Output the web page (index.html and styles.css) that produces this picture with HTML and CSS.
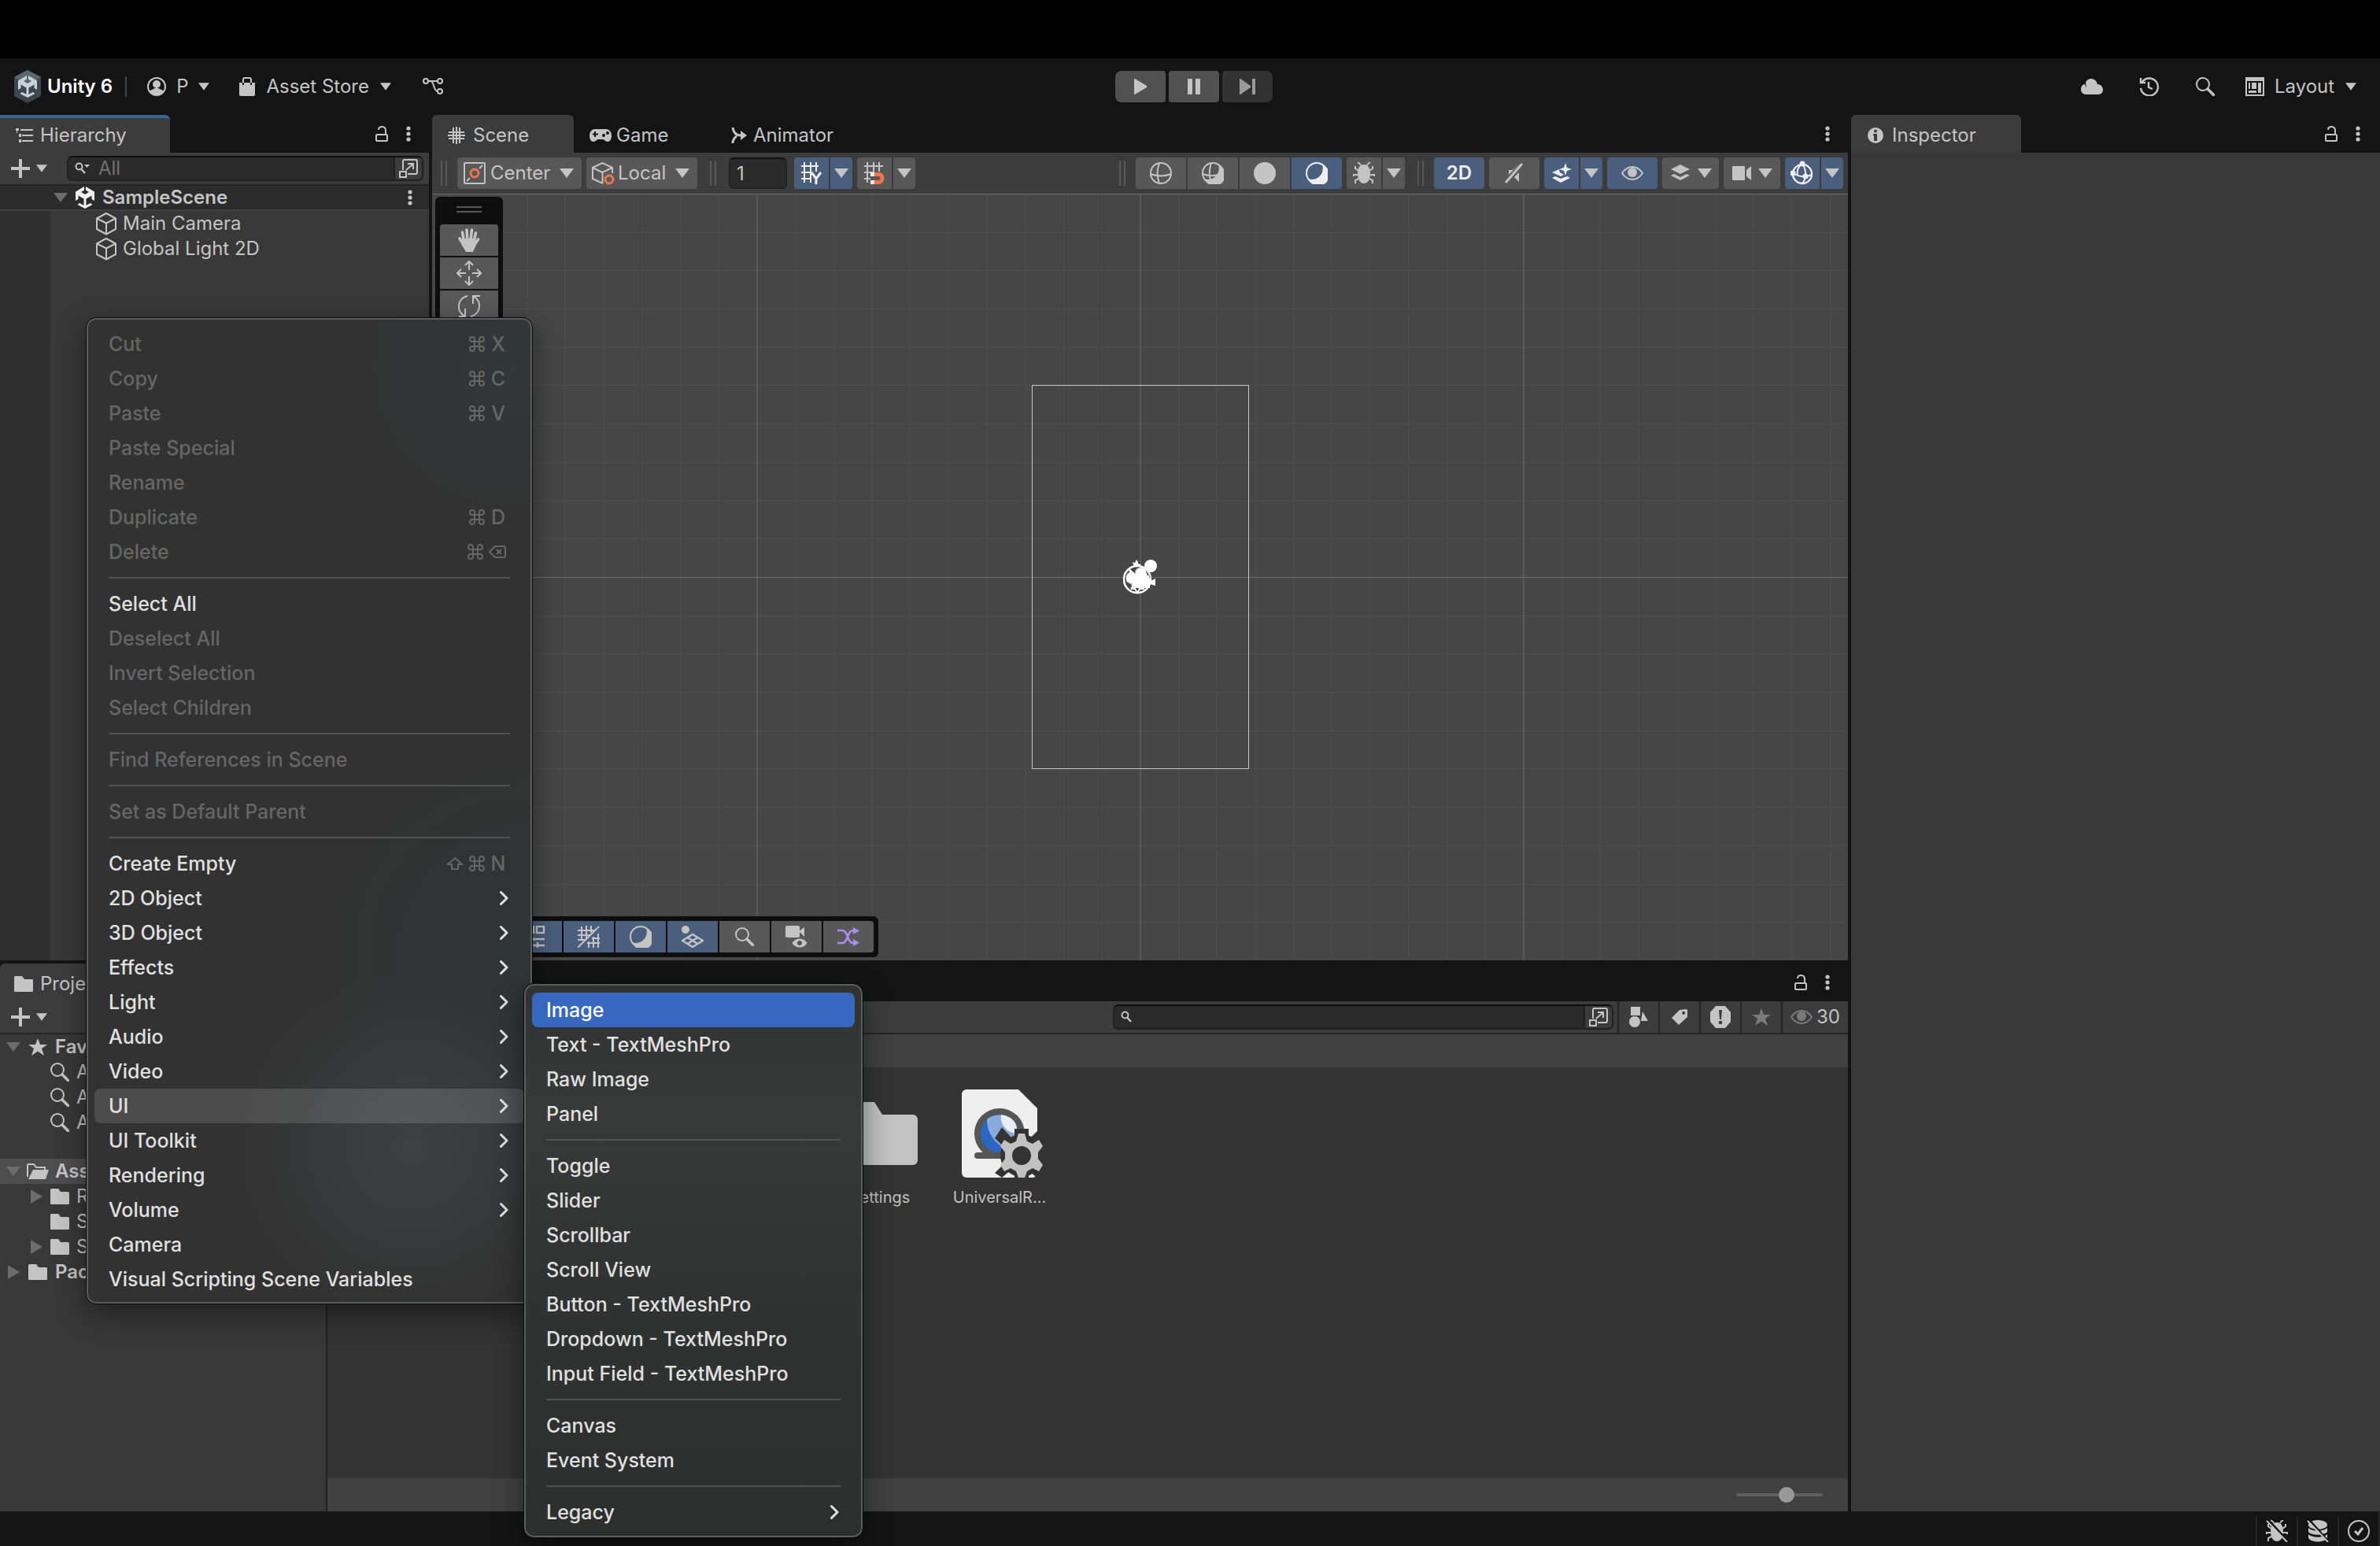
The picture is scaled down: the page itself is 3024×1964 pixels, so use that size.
FILE: index.html
```html
<!DOCTYPE html>
<html lang="en">
<head>
<meta charset="utf-8">
<title>Unity 6 - SampleScene</title>
<link rel="stylesheet" href="styles.css">
</head>
<body>
<svg class="sprite" aria-hidden="true">
  <symbol id="caret" viewBox="0 0 18 12"><path d="M0 0h18L9 12z"/></symbol>
  <symbol id="lock" viewBox="0 0 18 22"><path d="M5 6C5 3 7 2 9.500 2C13 2 14 4 14 7V12" fill="none" stroke="currentColor" stroke-width="2"/><rect x="2" y="12" width="14" height="8" rx="1" fill="none" stroke="currentColor" stroke-width="2"/></symbol>
  <symbol id="dots" viewBox="0 0 6 20"><circle cx="3" cy="3" r="2.600"/><circle cx="3" cy="10" r="2.600"/><circle cx="3" cy="17" r="2.600"/></symbol>
  <symbol id="plus" viewBox="0 0 24 24"><path d="M10 0h4v10h10v4H14v10h-4V14H0v-4h10z"/></symbol>
  <symbol id="search" viewBox="0 0 24 24"><circle cx="9" cy="9" r="8" fill="none" stroke="currentColor" stroke-width="2"/><path d="M15 15l7.500 7.500" stroke="currentColor" stroke-width="3.500" stroke-linecap="round"/></symbol>
  <symbol id="search-small" viewBox="0 0 20 16"><circle cx="5.500" cy="5.500" r="4" fill="none" stroke="currentColor" stroke-width="2"/><path d="M8.500 9l4.500 5" stroke="currentColor" stroke-width="2.400"/></symbol>
  <symbol id="popout" viewBox="0 0 24 24"><path d="M5 14V3a2 2 0 0 1 2-2h14a2 2 0 0 1 2 2v14a2 2 0 0 1-2 2H11" fill="none" stroke="currentColor" stroke-width="2"/><rect x="1" y="16" width="8" height="7" fill="none" stroke="currentColor" stroke-width="2"/><path d="M9 14l8-7M11 6h7v7" fill="none" stroke="currentColor" stroke-width="2"/></symbol>
  <symbol id="cube" viewBox="0 0 28 30"><path d="M14 2L26 8.500V22L14 28.500L2 22V8.500zM2 8.500L14 14.500L26 8.500M14 14.500V28" fill="none" stroke="currentColor" stroke-width="2" stroke-linejoin="round"/></symbol>
  <symbol id="unity" viewBox="0 0 26 28"><path d="M12 0L1 6.500v11.500l3.500-2V11.500l7 4v8.500l-2.500-1.500-3-1.500-2.500 2L13 28l9.500-5-2.500-2-3 1.500-2.500 1.500v-8.500l7-4V16l3.500 2V6.500L14 0v4.500l4 2.500-5 3-5-3 4-2.500z"/></symbol>
  <symbol id="folder" viewBox="0 0 24 20"><path d="M0 1.500A1.500 1.500 0 0 1 1.500 0H10l3 4h9.500A1.500 1.500 0 0 1 24 5.500v13a1.500 1.500 0 0 1-1.500 1.500h-21A1.500 1.500 0 0 1 0 18.500z"/></symbol>
  <symbol id="folder-open" viewBox="0 0 28 20"><path d="M1 17V2a1 1 0 0 1 1-1h7l3 4h11v3" fill="none" stroke="currentColor" stroke-width="2"/><path d="M8 8h20l-4 12H2z"/></symbol>
  <symbol id="star" viewBox="0 0 24 22"><path d="M12 0l3 8h9l-7 5 3 9-8-5.500L4 22l3-9-7-5h9z"/></symbol>
  <symbol id="hash" viewBox="0 0 22 22"><path d="M7 1v20M15 1v20M1 7h20M1 15h20M11 0v22M0 11h22" stroke="currentColor" stroke-width="2"/></symbol>
  <symbol id="chevron" viewBox="0 0 12 20"><path d="M2.500 2.500L10 10L2.500 17.500" fill="none" stroke="currentColor" stroke-width="3" stroke-linecap="round" stroke-linejoin="round"/></symbol>
  <symbol id="cmd" viewBox="0 0 20 20"><path d="M7 7V4a3 3 0 1 0-3 3h12a3 3 0 1 0-3-3v12a3 3 0 1 0 3-3H4a3 3 0 1 0 3 3z" fill="none" stroke="currentColor" stroke-width="2"/></symbol>
  <symbol id="bug" viewBox="0 0 28 28"><path d="M14 3c6 0 8 5 8 12s-3 12-8 12-8-5-8-12 2-12 8-12z"/><path d="M10 4L8 1M8 1H6M18 4l2-3M20 1h2M7 11L3 8V5M21 11l4-3V5M6 16H1v2M22 16h5v2M7 21l-4 2v4M21 21l4 2v4" fill="none" stroke="currentColor" stroke-width="2"/></symbol>
  <symbol id="eye" viewBox="0 0 28 20"><path d="M1 10C5 4 9 2 14 2s9 2 13 8c-4 6-8 8-13 8S5 16 1 10z" fill="none" stroke="currentColor" stroke-width="2"/><circle cx="14" cy="9" r="6"/></symbol>
  <symbol id="shade" viewBox="0 0 28 28"><circle cx="14" cy="14" r="13" fill="none" stroke="currentColor" stroke-width="2"/><path d="M21 3a14 14 0 1 1-18 18C13 25 25 16 21 3z"/></symbol>
</svg>

<div class="bezel"></div>

<header class="appbar">
  <div class="appbar-left">
    <svg class="logo" viewBox="0 0 34 42"><path d="M17 0L34 9v24L17 42L0 33V9z" fill="#3e464f"/><path d="M17 0L34 9L17 19L0 9z" fill="#5c6770"/><g transform="translate(4,7)" fill="#c9d1da"><path d="M12 0L1 6.500v11.500l3.500-2V11.500l7 4v8.500l-2.500-1.500-3-1.500-2.500 2L13 28l9.500-5-2.500-2-3 1.500-2.500 1.500v-8.500l7-4V16l3.500 2V6.500L14 0v4.500l4 2.500-5 3-5-3 4-2.500z"/></g></svg>
    <strong class="product">Unity 6</strong>
    <span class="rule"></span>
    <button class="bar-btn account" aria-label="Account"><svg width="24" height="24" viewBox="0 0 24 24"><circle cx="12" cy="12" r="11" fill="none" stroke="currentColor" stroke-width="2"/><circle cx="12" cy="9" r="5"/><path d="M3.500 18c2-3 5-2.500 6-4h5c1 1.500 4 1 6 4-2 3-5 5-8.500 5s-6.500-2-8.500-5z"/></svg>P<svg class="caret-s"><use href="#caret"/></svg></button>
    <button class="bar-btn store"><svg width="20" height="24" viewBox="0 0 20 24"><path d="M0 7h20v15a2 2 0 0 1-2 2H2a2 2 0 0 1-2-2z"/><path d="M5 8V3a2 2 0 0 1 2-2h6a2 2 0 0 1 2 2v5" fill="none" stroke="currentColor" stroke-width="2"/><path d="M5 7v3M15 7v3" stroke="#141414" stroke-width="2"/></svg>Asset Store<svg class="caret-s"><use href="#caret"/></svg></button>
    <button class="bar-btn" aria-label="Version control"><svg width="26" height="24" viewBox="0 0 26 24" fill="none" stroke="currentColor" stroke-width="2"><circle cx="4" cy="5" r="3"/><circle cx="22" cy="5" r="3"/><circle cx="22" cy="18" r="3"/><path d="M7 5h12M10 5c5 0 3 12 9 13"/></svg></button>
  </div>
  <div class="playback">
    <button aria-label="Play"><svg width="16" height="20" viewBox="0 0 16 20"><path d="M0 0h1l15 9v2L1 20H0z"/></svg></button>
    <button aria-label="Pause"><svg width="16" height="20" viewBox="0 0 16 20"><rect width="6" height="20" rx="1"/><rect x="10" width="6" height="20" rx="1"/></svg></button>
    <button aria-label="Step" class="off"><svg width="20" height="20" viewBox="0 0 20 20"><path d="M0 0h1l13 9v2L1 20H0z"/><rect x="16" width="4" height="20"/></svg></button>
  </div>
  <div class="appbar-right">
    <button class="bar-btn" aria-label="Cloud"><svg width="28" height="20" viewBox="0 0 28 20"><path d="M6 20a6 6 0 0 1-6-6c0-4 2-7 5-7l2 5-1-7c2-7 13-7 15 2 4 0 7 3 7 7 0 3-2 6-6 6z"/></svg></button>
    <button class="bar-btn" aria-label="History"><svg width="26" height="24" viewBox="0 0 26 24" fill="none" stroke="currentColor" stroke-width="2.400"><path d="M4 6A11 11 0 1 1 2 14M2 1v6h6M12 6v7l5 2"/></svg></button>
    <button class="bar-btn" aria-label="Search"><svg width="24" height="24"><use href="#search"/></svg></button>
    <label class="bar-select"><svg width="24" height="24" viewBox="0 0 24 24"><path d="M1 1h22v22H1z" fill="none" stroke="currentColor" stroke-width="2"/><path d="M1 1h22v4H1zM4 7h2v8H4zM8 7h6v8H8zM16 7h4v13h-4zM4 17h10v3H4z"/></svg><select aria-label="Layout"><option>Layout</option></select><svg class="caret-s"><use href="#caret"/></svg></label>
  </div>
</header>

<main class="workspace">
  <div class="work-left">
    <div class="work-top">
      <section class="panel hierarchy">
        <div class="tabs">
          <button class="tab active focus"><svg width="22" height="20" viewBox="0 0 22 20"><path d="M6 3h16M8 10h14M8 17h14" stroke="currentColor" stroke-width="2"/><path d="M0 1h4v3H0zM4 8h3v4H4zM4 15h3v4H4zM1 4h1v3H1z"/></svg>Hierarchy</button>
          <span class="tab-tools"><svg width="18" height="22"><use href="#lock"/></svg><svg width="6" height="20"><use href="#dots"/></svg></span>
        </div>
        <div class="toolbar hier-bar">
          <button class="add" aria-label="Add"><svg width="24" height="24"><use href="#plus"/></svg><svg class="caret-s"><use href="#caret"/></svg></button>
          <label class="search"><svg width="22" height="16" viewBox="0 0 22 16"><use href="#search-small" width="20" height="16"/><path d="M12 3h7l-3.500 4z"/></svg><input type="text" placeholder="All" aria-label="Search hierarchy"><span class="search-end"><svg width="24" height="24"><use href="#popout"/></svg></span></label>
        </div>
        <div class="hier-body">
          <div class="hrow scene-row"><svg class="fold" width="18" height="14"><use href="#caret" width="18" height="14"/></svg><svg class="white" width="26" height="28"><use href="#unity"/></svg><b>SampleScene</b><svg class="end" width="6" height="20"><use href="#dots"/></svg></div>
          <div class="hrows">
            <div class="hrow child"><svg width="28" height="30"><use href="#cube"/></svg>Main Camera</div>
            <div class="hrow child"><svg width="28" height="30"><use href="#cube"/></svg>Global Light 2D</div>
          </div>
        </div>
      </section>

      <section class="panel scene">
        <div class="tabs">
          <button class="tab active t-scene"><svg width="22" height="22"><use href="#hash"/></svg>Scene</button>
          <button class="tab t-game"><svg width="28" height="18" viewBox="0 0 28 18"><path d="M7 1h14a7 8 0 0 1 7 8c0 5-2 8-5 8s-4-3-6-3h-6c-2 0-3 3-6 3s-5-3-5-8a7 8 0 0 1 7-8z"/><path d="M7 4v7M4 7.500h7" stroke="#141414" stroke-width="2"/><circle cx="18" cy="9" r="2" fill="#141414"/><circle cx="23" cy="6" r="2" fill="#141414"/></svg>Game</button>
          <button class="tab t-anim"><svg width="20" height="22" viewBox="0 0 20 22"><path d="M2 1c1 7 4 10 10 10M2 21c0-4 2-7 5-9" fill="none" stroke="currentColor" stroke-width="3"/><path d="M12 5l8 6-8 6z"/></svg>Animator</button>
          <span class="tab-tools"><svg width="6" height="20"><use href="#dots"/></svg></span>
        </div>
        <div class="scene-bar">
          <span class="grip"></span>
          <label class="drop w-center"><svg width="28" height="28" viewBox="0 0 28 28" fill="none" stroke-width="2"><rect x="1" y="1" width="26" height="26" rx="1" stroke="currentColor"/><path d="M4 24l4-4M20 8l4-4" stroke="currentColor"/><circle cx="14" cy="14" r="5" stroke="#f0764a" stroke-width="3"/></svg><select aria-label="Handle position"><option>Center</option></select><svg class="caret"><use href="#caret"/></svg></label>
          <label class="drop w-local"><svg width="30" height="30" viewBox="0 0 30 30" fill="none" stroke-width="2"><path d="M15 28L2 22V8L14.500 2L27 8v7M2 8l12.500 6L27 8M14.500 14v14" stroke="currentColor"/><circle cx="23" cy="23" r="5" stroke="#f0764a" stroke-width="3"/></svg><select aria-label="Handle rotation"><option>Local</option></select><svg class="caret"><use href="#caret"/></svg></label>
          <span class="grip g2"></span>
          <input class="snap" type="text" value="1" aria-label="Grid size">
          <span class="split"><button class="on w44" aria-label="Grid axis"><svg width="28" height="28" viewBox="0 0 28 28"><path d="M5 0v26M13 0v26M20 0v12M1 5h22M1 13h13M1 21h13" stroke="currentColor" stroke-width="2"/><path d="M14 13l6 8 6-8M20 20v8" fill="none" stroke="currentColor" stroke-width="3"/></svg></button><button class="on w28" aria-label="Grid options"><svg class="caret"><use href="#caret"/></svg></button></span>
          <span class="split"><button class="w44" aria-label="Snapping"><svg width="28" height="28" viewBox="0 0 28 28"><path d="M5 0v26M13 0v14M20 0v12M1 5h24M1 13h13M1 21h8" stroke="currentColor" stroke-width="2"/><path d="M14 15.500h6a4 5 0 0 1 0 10h-6" fill="none" stroke="#f0764a" stroke-width="5"/><path d="M9 13h5v5H9zM9 23h5v5H9z" fill="#eee"/></svg></button><button class="w28" aria-label="Snap options"><svg class="caret"><use href="#caret"/></svg></button></span>
          <span class="spacer"></span>
          <span class="grip"></span>
          <span class="split modes">
            <button aria-label="Wireframe"><svg width="28" height="28" viewBox="0 0 28 28" fill="none" stroke="currentColor" stroke-width="2"><circle cx="14" cy="14" r="13"/><path d="M12 1c-3 8-3 18 0 26M1 15c8 3 18 3 26 0"/></svg></button>
            <button aria-label="Shaded wireframe"><svg width="28" height="28"><use href="#shade"/><path d="M12 1c-3 8-3 18 0 24M1 15c8 3 13 3 20 1" fill="none" stroke="currentColor" stroke-width="2"/></svg></button>
            <button aria-label="Unlit"><svg width="28" height="28"><circle cx="14" cy="14" r="14"/></svg></button>
            <button class="on" aria-label="Shaded"><svg width="28" height="28"><use href="#shade"/></svg></button>
          </span>
          <span class="split"><button class="w44" aria-label="Debug draw"><svg width="28" height="28"><use href="#bug"/></svg></button><button class="w28" aria-label="Debug options"><svg class="caret"><use href="#caret"/></svg></button></span>
          <span class="grip g3"></span>
          <button class="tool on w64"><b>2D</b></button>
          <button class="tool w64" aria-label="Audio"><svg width="28" height="28" viewBox="0 0 28 28"><path d="M7 10h5l8-7v22l-6-6H7z"/><path d="M0 28L26 2" stroke="#585858" stroke-width="7"/><path d="M3 26L24 2" stroke="currentColor" stroke-width="3"/></svg></button>
          <span class="split"><button class="on w44" aria-label="Effects"><svg width="28" height="28" viewBox="0 0 28 28"><path d="M19 1l2 6 6 2-6 2-2 6-2-6-6-2 6-2z"/><path d="M2 13l9-4 1 4 5 3-4 2zM2 20l4-2 7 3 8-3 4 2-12 6z"/></svg></button><button class="on w28" aria-label="Effects options"><svg class="caret"><use href="#caret"/></svg></button></span>
          <button class="tool on dim w64" aria-label="Scene visibility"><svg width="28" height="20"><use href="#eye"/></svg></button>
          <button class="tool w72" aria-label="Layers"><svg width="26" height="22" viewBox="0 0 26 22"><path d="M1 6l12-6 12 6-12 6zM1 14l4-2 8 4 8-4 4 2-12 6z"/></svg><svg class="caret"><use href="#caret"/></svg></button>
          <button class="tool w72" aria-label="Camera"><svg width="24" height="20" viewBox="0 0 24 20"><rect y="1" width="16" height="18" rx="1"/><path d="M18 6l6-5v18l-6-5z"/></svg><svg class="caret"><use href="#caret"/></svg></button>
          <span class="split"><button class="on w44" aria-label="Gizmos"><svg width="30" height="32" viewBox="0 0 30 32"><circle cx="15" cy="17" r="12" fill="none" stroke="currentColor" stroke-width="2.400"/><path d="M15 4c5 7 6 18 0 25M3 16c8 5 17 5 24 2M14 4c-5 6-6 8-5 15" fill="none" stroke="currentColor" stroke-width="2"/><circle cx="15" cy="4" r="3.500"/><circle cx="3" cy="16" r="3.500"/><circle cx="19" cy="20" r="3.500"/></svg></button><button class="on w28" aria-label="Gizmo options"><svg class="caret"><use href="#caret"/></svg></button></span>
        </div>
        <div class="canvas">
          <svg class="grid" aria-hidden="true">
            <defs><pattern id="cells" width="487" height="487" patternUnits="userSpaceOnUse">
              <path d="M49.500 0v487M97.500 0v487M146.500 0v487M195.500 0v487M243.500 0v487M292.500 0v487M341.500 0v487M390.500 0v487M438.500 0v487M0 49.500h487M0 97.500h487M0 146.500h487M0 195.500h487M0 243.500h487M0 292.500h487M0 341.500h487M0 390.500h487M0 438.500h487" stroke="#4f4f4f"/>
              <path d="M0.500 0v487M0 0.500h487" stroke="#6c6c6c"/>
            </pattern></defs>
            <svg x="50%" y="50%" overflow="visible"><rect x="-2922" y="-2922" width="5844" height="5844" fill="url(#cells)"/></svg>
          </svg>
          <div class="camera-frame">
            <svg width="44" height="46" viewBox="0 0 44 46"><circle cx="18" cy="26" r="17" fill="none" stroke="#fff" stroke-width="2.500"/><path d="M8 14l5 5M28 14l-5 5M10 38l4-3M26 38l-4-3" stroke="#fff" stroke-width="3"/><path d="M4 22a7 7 0 0 1 11-4c1-9 14-9 15 1l5 4v5l6-3v9l-7-2v5H12l-2-5c-5-1-7-4-6-10z" fill="#fff"/><path d="M10 38h5l3 5 3-5h6" fill="none" stroke="#fff" stroke-width="2"/><path d="M6 29c2 3 4 3 6 3M15 19c0-5 2-7 5-8M30 20l4 1v4" fill="none" stroke="#777" stroke-width="1"/><circle cx="35" cy="9" r="8" fill="#fff"/><path d="M12 4l3 1 2-4 2 3v2l4 1-5 3h-4z" fill="#fff"/></svg>
          </div>
          <div class="tool-stack">
            <span class="handle"></span>
            <button aria-label="Hand"><svg width="28" height="32" viewBox="0 0 28 32"><path d="M7.500 18L5.500 6M11.800 16L11 3M16 16l1.500-13M20 18L22.500 7M7 22L2 14M21 22l4.500-7" stroke="currentColor" stroke-width="3.600" stroke-linecap="round"/><path d="M5 14l17 0 1 8-4 9H10L4 21z"/></svg></button>
            <button aria-label="Move"><svg width="32" height="32" viewBox="0 0 32 32" fill="none" stroke="currentColor" stroke-width="2"><path d="M16 12V1M11 6l5-5 5 5M16 20v11M11 26l5 5 5-5M12 16H1M6 11l-5 5 5 5M20 16h11M26 11l5 5-5 5"/></svg></button>
            <button aria-label="Rotate"><svg width="28" height="28" viewBox="0 0 28 28" fill="none" stroke="currentColor" stroke-width="2"><path d="M12 1C-2 4-2 22 8 26M9 17v10H1M16 27C30 24 30 6 20 2M19 11V1h9"/></svg></button>
          </div>
          <div class="view-strip">
            <button class="on" aria-label="Tool settings"><svg width="28" height="28" viewBox="0 0 28 28" fill="none" stroke="currentColor" stroke-width="2.400"><rect x="2" y="1" width="8" height="8"/><rect x="14" y="1" width="9" height="8"/><path d="M0 17h24M8 13v8M0 25h24M15 21v7"/></svg></button>
            <button class="on" aria-label="Grid and snap"><svg width="28" height="28" viewBox="0 0 28 28" stroke="currentColor" stroke-width="2"><path d="M5 1v18M11 0v16M17 0v9M0 6h22M0 12h16M0 18h10M0 28L27 1M14 20v8M20 14v14M26 10v18M12 22h16M18 16h10"/></svg></button>
            <button class="on" aria-label="Draw modes"><svg width="28" height="28"><use href="#shade"/></svg></button>
            <button class="on" aria-label="View options"><svg width="28" height="28" viewBox="0 0 28 28"><circle cx="5" cy="5" r="5"/><path d="M14 11l13 8-13 8-13-8zM7.500 15l13 8M20.500 15l-13 8" fill="none" stroke="currentColor" stroke-width="2.400"/></svg></button>
            <button aria-label="Search scene"><svg width="24" height="24"><use href="#search"/></svg></button>
            <button aria-label="Camera preview"><svg width="28" height="28" viewBox="0 0 28 28"><rect width="18" height="15" rx="2"/><path d="M17 7l7-5v12z"/><path d="M8 22c5-8 15-8 20 0-5 8-15 8-20 0z" stroke="#585858"/><circle cx="18" cy="22" r="3" fill="#585858"/></svg></button>
            <button class="violet" aria-label="Orientation"><svg width="28" height="24" viewBox="0 0 28 24"><path d="M0 4h6c8 0 6 16 14 16h3M0 20h6c8 0 6-16 14-16h3" fill="none" stroke="currentColor" stroke-width="2.500"/><path d="M20 0l8 4.500-8 4.500zM20 15l8 4.500-8 4.500z"/></svg></button>
          </div>
        </div>
      </section>
    </div>

    <section class="panel project">
      <div class="tabs">
        <button class="tab active t-project"><svg width="24" height="20"><use href="#folder"/></svg>Project</button>
        <span class="tab-tools"><svg width="18" height="22"><use href="#lock"/></svg><svg width="6" height="20"><use href="#dots"/></svg></span>
      </div>
      <div class="toolbar proj-bar">
        <button class="add" aria-label="Create"><svg width="24" height="24"><use href="#plus"/></svg><svg class="caret-s"><use href="#caret"/></svg></button>
        <label class="search"><svg width="20" height="16"><use href="#search-small"/></svg><input type="text" aria-label="Search project"><span class="search-end"><svg width="24" height="24"><use href="#popout"/></svg></span></label>
        <div class="filters">
          <button aria-label="Filter by type"><svg width="26" height="28" viewBox="0 0 26 28"><path d="M3 1h12v11H3zM18 7l7 12h-9z"/><circle cx="8" cy="20" r="7.500" stroke="#3c3c3c"/></svg></button>
          <button aria-label="Filter by label"><svg width="22" height="22" viewBox="0 0 22 22"><path d="M11 2l9-1 1 1v9L10 21 1 12zM17 4a2 2 0 1 0 1 1z"/></svg></button>
          <button aria-label="Import log"><svg width="28" height="28" viewBox="0 0 28 28"><path d="M8 0h12l7 8v12l-7 8H8l-7-8V8z"/><path d="M12 5h4l-1 12h-2z" fill="#3c3c3c"/><circle cx="14" cy="21" r="2.300" fill="#3c3c3c"/></svg></button>
          <button class="faint" aria-label="Save search"><svg width="24" height="22"><use href="#star"/></svg></button>
          <button class="count"><svg class="faint" width="28" height="20"><use href="#eye"/></svg>30</button>
        </div>
      </div>
      <div class="proj-body">
        <div class="tree">
          <div class="trow bold"><svg class="fold" width="18" height="14"><use href="#caret" width="18" height="14"/></svg><svg width="24" height="22"><use href="#star"/></svg>Favorites</div>
          <div class="trow kid"><svg width="24" height="24"><use href="#search"/></svg>All Materials</div>
          <div class="trow kid"><svg width="24" height="24"><use href="#search"/></svg>All Models</div>
          <div class="trow kid"><svg width="24" height="24"><use href="#search"/></svg>All Prefabs</div>
          <div class="tree-gap"></div>
          <div class="trow bold picked"><svg class="fold" width="18" height="14"><use href="#caret" width="18" height="14"/></svg><svg width="28" height="20"><use href="#folder-open"/></svg>Assets</div>
          <div class="trow sub"><svg class="fold" width="18" height="18" viewBox="0 0 18 18"><path d="M2 0l15 9-15 9z"/></svg><svg width="24" height="20"><use href="#folder"/></svg>Resources</div>
          <div class="trow kid"><svg width="24" height="20"><use href="#folder"/></svg>Scenes</div>
          <div class="trow sub"><svg class="fold" width="18" height="18" viewBox="0 0 18 18"><path d="M2 0l15 9-15 9z"/></svg><svg width="24" height="20"><use href="#folder"/></svg>Settings</div>
          <div class="trow bold"><svg class="fold" width="18" height="18" viewBox="0 0 18 18"><path d="M2 0l15 9-15 9z"/></svg><svg width="24" height="20"><use href="#folder"/></svg>Packages</div>
        </div>
        <div class="assets">
          <div class="crumbs"></div>
          <div class="asset-grid">
            <figure><svg width="96" height="112" viewBox="0 0 96 112"><path d="M0 22a6 6 0 0 1 6-6h35l10 16h39a6 6 0 0 1 6 6v52a6 6 0 0 1-6 6H6a6 6 0 0 1-6-6z"/></svg><figcaption>Settings</figcaption></figure>
            <figure><svg width="112" height="112" viewBox="-8 0 112 112"><path d="M0 6a6 6 0 0 1 6-6h66l24 24v82a6 6 0 0 1-6 6H6a6 6 0 0 1-6-6z" fill="#eee"/><rect x="16" y="80" width="50" height="8" rx="4" fill="#555"/><circle cx="48" cy="56" r="32" fill="#555"/><circle cx="48" cy="56" r="24" fill="#2c66c4"/><path d="M32 38c8-8 28-8 36 4 6 12 0 26-12 34-14-8-24-20-24-38z" fill="#87abdc"/><path d="M50 32c14 2 20 10 21 24-12 0-23-10-21-24z" fill="#e8eef6"/><g transform="translate(76,84)"><circle r="27" fill="#333"/><path d="M-9-34H9V28H-9zM-34-22l9-14L28 22l-9 6zM34-22l-9-14L-34 22l9 6z" fill="#333"/><path d="M-4-28H4l3 10 7 3 8-5 5 8-6 8v8l6 8-5 8-8-4-7 4-3 8h-8l-3-8-7-4-8 4-5-8 6-8v-8l-6-8 5-8 8 5 7-3z" fill="#c2c2c2"/><circle r="12" fill="#333"/></g></svg><figcaption>UniversalR...</figcaption></figure>
          </div>
          <div class="assets-foot"><input type="range" min="0" max="100" value="60" aria-label="Icon size"></div>
        </div>
      </div>
    </section>
  </div>

  <section class="panel inspector">
    <div class="tabs">
      <button class="tab active"><svg width="22" height="22" viewBox="0 0 22 22"><circle cx="11" cy="11" r="10"/><path d="M8 9h5v9H9v-7H8z" fill="#3c3c3c"/><circle cx="11" cy="5.500" r="2" fill="#3c3c3c"/></svg>Inspector</button>
      <span class="tab-tools"><svg width="18" height="22"><use href="#lock"/></svg><svg width="6" height="20"><use href="#dots"/></svg></span>
    </div>
    <div class="inspector-body"></div>
  </section>
</main>

<footer class="statusbar">
  <button aria-label="Debugger off"><svg width="28" height="28"><use href="#bug"/><path d="M3 0l26 28" stroke="#141414" stroke-width="3"/><path d="M1 1l26 27" stroke="currentColor" stroke-width="2"/></svg></button>
  <button aria-label="Cache server off"><svg width="28" height="28" viewBox="0 0 28 28"><ellipse cx="14" cy="6" rx="12" ry="6"/><path d="M2 10c5 5 19 5 24 0v5c-4 5-20 5-24 0zM2 18c5 5 19 5 24 0v5c-4 6-20 6-24 0z"/><path d="M3 0l25 28" stroke="#141414" stroke-width="3"/><path d="M1 1l26 27" stroke="currentColor" stroke-width="2"/></svg></button>
  <button aria-label="Progress"><svg width="28" height="28" viewBox="0 0 28 28" fill="none" stroke="currentColor" stroke-width="2"><circle cx="14" cy="14" r="13"/><path d="M9 14l4 4 6-8" stroke-width="3"/></svg></button>
</footer>

<div class="menu main-menu" role="menu">
  <button disabled>Cut<span><svg><use href="#cmd"/></svg><i>X</i></span></button>
  <button disabled>Copy<span><svg><use href="#cmd"/></svg><i>C</i></span></button>
  <button disabled>Paste<span><svg><use href="#cmd"/></svg><i>V</i></span></button>
  <button disabled>Paste Special</button>
  <button disabled>Rename</button>
  <button disabled>Duplicate<span><svg><use href="#cmd"/></svg><i>D</i></span></button>
  <button disabled>Delete<span><svg><use href="#cmd"/></svg><svg class="wide" viewBox="0 0 22 18" fill="none" stroke="currentColor" stroke-width="2"><path d="M8 2h11a2 2 0 0 1 2 2v10a2 2 0 0 1-2 2H8L1 9zM10 6l6 6M16 6l-6 6"/></svg></span></button>
  <hr>
  <button>Select All</button>
  <button disabled>Deselect All</button>
  <button disabled>Invert Selection</button>
  <button disabled>Select Children</button>
  <hr>
  <button disabled>Find References in Scene</button>
  <hr>
  <button disabled>Set as Default Parent</button>
  <hr>
  <button>Create Empty<span><svg class="wide" viewBox="0 0 22 18" fill="none" stroke="currentColor" stroke-width="2"><path d="M11 2l9 8h-5v6H7v-6H2z"/></svg><svg><use href="#cmd"/></svg><i>N</i></span></button>
  <button>2D Object<svg class="more"><use href="#chevron"/></svg></button>
  <button>3D Object<svg class="more"><use href="#chevron"/></svg></button>
  <button>Effects<svg class="more"><use href="#chevron"/></svg></button>
  <button>Light<svg class="more"><use href="#chevron"/></svg></button>
  <button>Audio<svg class="more"><use href="#chevron"/></svg></button>
  <button>Video<svg class="more"><use href="#chevron"/></svg></button>
  <button class="open">UI<svg class="more"><use href="#chevron"/></svg></button>
  <button>UI Toolkit<svg class="more"><use href="#chevron"/></svg></button>
  <button>Rendering<svg class="more"><use href="#chevron"/></svg></button>
  <button>Volume<svg class="more"><use href="#chevron"/></svg></button>
  <button>Camera</button>
  <button>Visual Scripting Scene Variables</button>
</div>

<div class="menu sub-menu" role="menu">
  <button class="selected">Image</button>
  <button>Text - TextMeshPro</button>
  <button>Raw Image</button>
  <button>Panel</button>
  <hr>
  <button>Toggle</button>
  <button>Slider</button>
  <button>Scrollbar</button>
  <button>Scroll View</button>
  <button>Button - TextMeshPro</button>
  <button>Dropdown - TextMeshPro</button>
  <button>Input Field - TextMeshPro</button>
  <hr>
  <button>Canvas</button>
  <button>Event System</button>
  <hr>
  <button>Legacy<svg class="more"><use href="#chevron"/></svg></button>
</div>
</body>
</html>
```
FILE: styles.css
```css
* { box-sizing: border-box; }

:root {
  --dark: #141414;
  --bar: #3c3c3c;
  --panel: #383838;
  --btn: #585858;
  --on: #4a5f7d;
  --text: #c4c4c4;
}

body {
  margin: 0;
  height: 100vh;
  display: flex;
  flex-direction: column;
  background: var(--dark);
  color: var(--text);
  font: 24px/32px Inter, "Liberation Sans", sans-serif;
  overflow: hidden;
}

button, input, select { font: inherit; color: inherit; }
button { border: 0; padding: 0; background: none; display: flex; align-items: center; justify-content: center; white-space: nowrap; }
select { appearance: none; border: 0; background: none; padding: 0; }
svg { flex: none; display: block; }
svg:not([fill]) { fill: currentColor; }
b, strong { font-weight: 600; }
.sprite { position: absolute; width: 0; height: 0; }
.caret { width: 18px; height: 12px; }
.caret-s { width: 14px; height: 10px; }
.spacer { flex: 1; }

.bezel { height: 74px; background: #000; flex: none; }

/* application bar */
.appbar { flex: none; height: 72px; display: grid; grid-template-columns: 1fr auto 1fr; align-items: center; padding: 0 8px 0 18px; }
.appbar-left, .appbar-right, .playback { display: flex; align-items: center; }
.logo { width: 34px; height: 42px; }
.product { color: #fff; margin-left: 8px; }
.rule { width: 2px; height: 26px; background: #444; margin: 0 26px 0 16px; }
.bar-btn, .bar-select { display: flex; align-items: center; gap: 14px; }
.account { margin-right: 38px; gap: 13px; }
.store { margin-right: 40px; }
.playback { gap: 4px; }
.playback button { width: 64px; height: 40px; background: #515151; border-radius: 4px; }
.playback button:first-child { border-radius: 8px 4px 4px 8px; }
.playback .off { background: #323232; color: #9a9a9a; border-radius: 4px 8px 8px 4px; }
.appbar-right { justify-content: flex-end; padding-right: 22px; gap: 46px; }
.bar-select { margin-left: -7px; gap: 13px; }

/* work area */
.workspace { flex: 1; min-height: 0; display: flex; gap: 4px; }
.work-left { flex: 1; min-width: 0; display: flex; flex-direction: column; gap: 4px; }
.work-top { flex: 1; min-height: 0; display: flex; gap: 4px; }
.panel { display: flex; flex-direction: column; min-width: 0; }
.hierarchy { width: 545px; }
.scene { flex: 1; }
.inspector { width: 672px; }
.project { flex: none; height: 696px; }

.tabs { display: flex; flex: none; height: 48px; }
.tab { min-width: 216px; padding: 3px 20px 0; gap: 10px; justify-content: flex-start; }
.tab.active { background: var(--bar); border-radius: 6px 6px 0 0; }
.tab.focus { border-top: 4px solid #3a6496; border-radius: 0 6px 0 0; padding-top: 0; gap: 9px; }
.t-scene { min-width: 180px; }
.t-game { min-width: 180px; gap: 6px; }
.t-anim { min-width: 180px; gap: 8px; }
.t-project { min-width: 180px; padding-left: 18px; gap: 9px; }
.tab-tools { display: flex; align-items: center; gap: 22px; margin-left: auto; padding-right: 23px; }
.inspector .tab-tools { padding-right: 25px; }

.toolbar { display: flex; align-items: center; flex: none; height: 40px; background: var(--bar); }
.add { flex: none; gap: 8px; padding: 0 14px; }
.search { display: flex; align-items: center; min-width: 0; height: 32px; background: #2a2a2a; border: 2px solid #212121; border-top-color: #0e0e0e; border-radius: 7px; padding-left: 8px; }
.search input { flex: 1; min-width: 0; border: 0; background: none; padding: 0 8px; outline: 0; }
.search input::placeholder { color: #707070; opacity: 1; }
.search-end { flex: none; width: 36px; height: 100%; display: flex; align-items: center; justify-content: center; background: var(--bar); border-left: 2px solid #212121; border-radius: 0 5px 5px 0; }
.hier-bar .search { flex: 1; margin: 0 7px 0 11px; }

.hier-body { flex: 1; display: flex; flex-direction: column; background: var(--panel); border-top: 2px solid #252525; }
.hrow { display: flex; align-items: center; height: 32px; gap: 9px; }
.scene-row { background: #2b2b2b; border-bottom: 2px solid #414141; padding: 0 21px 0 68px; }
.fold { color: #6c6c6c; }
.white { color: #f0f0f0; }
.end { margin-left: auto; }
.hrows { flex: 1; background: linear-gradient(90deg, #2f2f2f 64px, transparent 64px); }
.child { padding-left: 121px; gap: 7px; }

/* scene view */
.scene-bar { flex: none; display: flex; align-items: center; gap: 6px; height: 52px; background: var(--bar); padding: 0 6px 0 11px; }
.scene-bar > * { flex: none; }
.scene-bar > .spacer { flex: 1; }
.grip { width: 8px; height: 32px; border: solid #585858; border-width: 0 2px; margin-right: 7px; }
.g2 { margin: 0 10px; }
.g3 { margin: 0 7px 0 10px; }
.drop, .tool, .split button { height: 40px; background: var(--btn); border-radius: 4px; display: flex; align-items: center; justify-content: center; }
.drop { gap: 7px; justify-content: flex-start; padding: 0 10px 0 8px; }
.drop select { flex: 1; min-width: 0; }
.w-center { width: 158px; gap: 6px; }
.w-local { width: 141px; gap: 4px; padding-left: 6px; }
.snap { width: 74px; height: 40px; background: #2a2a2a; border: 2px solid #212121; border-top-color: #0e0e0e; border-radius: 6px; padding: 0 8px; margin-right: 3px; }
.split { display: flex; gap: 2px; }
.split button { border-radius: 0; }
.split button:first-child { border-radius: 4px 0 0 4px; }
.split button:last-child { border-radius: 0 4px 4px 0; }
.modes button, .w64 { width: 64px; }
.w44 { width: 44px; }
.w28 { width: 28px; }
.w72 { width: 72px; gap: 9px; }
.scene-bar .on, .view-strip .on { background: var(--on); color: #eee; }
.scene-bar .on .caret, .scene-bar .dim, .view-strip .on { color: var(--text); }

.canvas { flex: 1; position: relative; background: #464646; display: grid; place-items: center; overflow: hidden; }
.grid { position: absolute; inset: 0; width: 100%; height: 100%; }
.camera-frame { position: relative; width: 276px; height: 488px; border: 1px solid #c8c8c8; display: grid; place-items: center; }
.tool-stack { position: absolute; left: 4px; top: 4px; width: 86px; padding: 12px 6px 6px; background: #0e0e0e; border-radius: 6px; display: flex; flex-direction: column; gap: 2px; }
.handle { width: 32px; height: 8px; border: solid #585858; border-width: 2px 0; margin: 0 auto 13px; }
.tool-stack button { height: 40px; background: var(--btn); }
.tool-stack button:nth-child(2) { border-radius: 4px 4px 0 0; }
.view-strip { position: absolute; left: 95px; bottom: 4px; height: 52px; padding: 6px; background: #0e0e0e; border-radius: 6px; display: flex; gap: 2px; }
.view-strip button { width: 64px; height: 40px; background: var(--btn); }
.view-strip button:last-child { border-radius: 0 4px 4px 0; }
.view-strip .violet { color: #a98df0; }

/* project browser */
.proj-bar .search { width: 636px; margin: 0 5px 0 auto; }
.filters { display: flex; align-self: stretch; }
.filters button { width: 52px; border-left: 2px solid #252525; }
.filters .count { width: 85px; gap: 5px; }
.faint { color: #7a7a7a; }
.proj-body { flex: 1; min-height: 0; display: flex; border-top: 2px solid #252525; }
.tree { width: 416px; background: var(--panel); border-right: 2px solid #202020; }
.trow { height: 32px; display: flex; align-items: center; gap: 10px; padding-left: 8px; }
.tree-gap { height: 30px; }
.bold { font-weight: 600; }
.kid { padding-left: 64px; gap: 9px; }
.sub { padding-left: 37px; gap: 9px; }
.picked { background: #4d4d4d; gap: 8px; }
.assets { flex: 1; display: flex; flex-direction: column; background: #333; }
.crumbs { height: 42px; background: #404040; }
.asset-grid { flex: 1; display: flex; align-items: flex-start; padding: 28px 0 0 626px; color: #c2c2c2; }
figure { margin: 0; width: 152px; display: flex; flex-direction: column; align-items: center; gap: 9px; }
figcaption { font-size: 20px; }
.assets-foot { height: 42px; background: #404040; display: flex; align-items: center; justify-content: flex-end; padding-right: 32px; }
input[type=range] { appearance: none; width: 110px; height: 20px; margin: 0; background: linear-gradient(#5f5f5f, #5f5f5f) center / 100% 4px no-repeat; }
input[type=range]::-webkit-slider-thumb { appearance: none; width: 20px; height: 20px; border-radius: 50%; background: #999; }

.inspector-body { flex: 1; background: var(--panel); }

.statusbar { flex: none; height: 44px; display: flex; justify-content: flex-end; padding: 6px 0 0; border-right: 2px solid #262626; }
.statusbar button { width: 52px; border-left: 2px solid #262626; }

/* context menus */
.menu {
  position: absolute;
  padding: 9px 8px 7px;
  border: 2px solid #5c5e5e;
  border-radius: 12px;
  outline: 1px solid #0a0a0a;
  box-shadow: 0 12px 36px rgba(0, 0, 0, .45);
  color: #e0e0e0;
  font: 500 25px/44px Inter, "Liberation Sans", sans-serif;
}
.menu button { width: 100%; height: 44px; padding: 0 18px; justify-content: flex-start; border-radius: 8px; }
.menu button:disabled, .menu button span { color: #666; }
.menu hr { height: 2px; border: 0; margin: 10px 18px; background: #505151; }
.menu button span { margin: 0 5px 0 auto; display: flex; align-items: center; gap: 7px; }
.menu span svg { width: 20px; height: 20px; }
.menu span .wide { width: 22px; height: 18px; }
.menu i { font-style: normal; width: 20px; text-align: center; }
.menu .more { width: 12px; height: 20px; margin: 0 2px 0 auto; }
.main-menu {
  left: 110px; top: 404px; width: 566px;
  background:
    radial-gradient(circle at 410px 1050px, rgba(100, 108, 118, .24), transparent 220px),
    radial-gradient(circle at 540px 60px, rgba(50, 70, 80, .28), transparent 190px),
    radial-gradient(circle at 560px 810px, rgba(40, 60, 64, .28), transparent 260px),
    #323232;
}
.main-menu .open { background: rgba(255, 255, 255, .13); }
.sub-menu { left: 666px; top: 1250px; width: 430px; padding-bottom: 8px; background: linear-gradient(180deg, #303332, #383a39 170px, #303332 380px, #2d2f2e); }
.sub-menu .selected { background: #3568be; color: #fff; }
```
